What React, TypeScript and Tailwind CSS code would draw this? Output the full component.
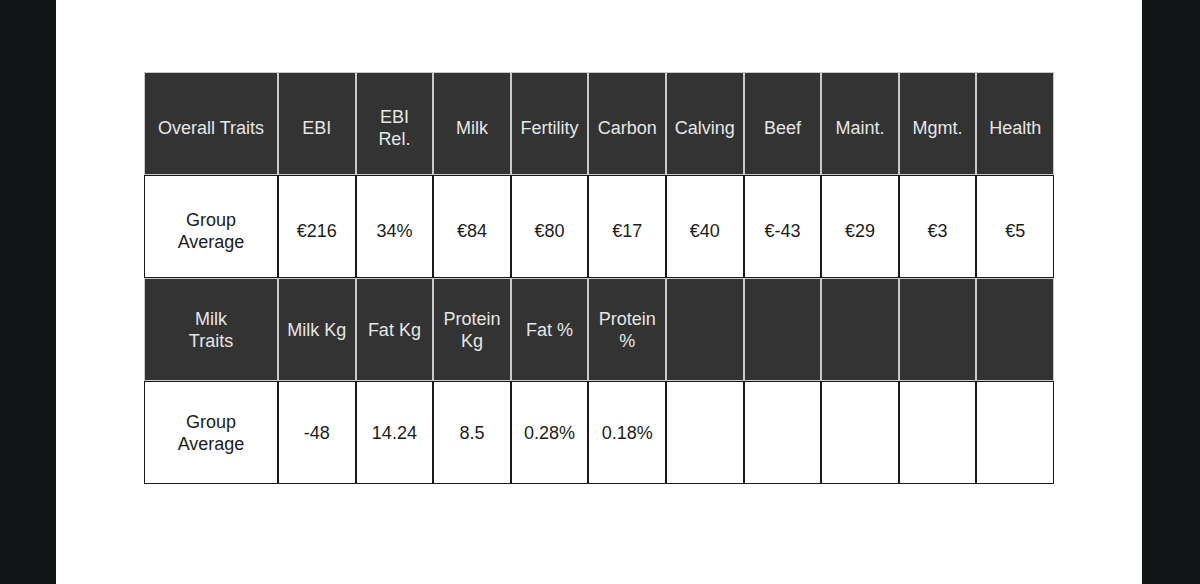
import React from "react";

type Cell = { lines: string[] };

const row1 = [
  ["Overall Traits"],
  ["EBI"],
  ["EBI", "Rel."],
  ["Milk"],
  ["Fertility"],
  ["Carbon"],
  ["Calving"],
  ["Beef"],
  ["Maint."],
  ["Mgmt."],
  ["Health"],
];
const row2 = [
  ["Group", "Average"],
  ["€216"],
  ["34%"],
  ["€84"],
  ["€80"],
  ["€17"],
  ["€40"],
  ["€-43"],
  ["€29"],
  ["€3"],
  ["€5"],
];
const row3 = [
  ["Milk", "Traits"],
  ["Milk Kg"],
  ["Fat Kg"],
  ["Protein", "Kg"],
  ["Fat %"],
  ["Protein", "%"],
  [],
  [],
  [],
  [],
  [],
];
const row4 = [
  ["Group", "Average"],
  ["-48"],
  ["14.24"],
  ["8.5"],
  ["0.28%"],
  ["0.18%"],
  [],
  [],
  [],
  [],
  [],
];

function Row({ cells, dark, shift }: { cells: string[][]; dark: boolean; shift: boolean }) {
  return (
    <>
      {cells.map((lines, i) => (
        <div
          key={i}
          className={
            dark
              ? `flex h-[103px] items-center justify-center border border-[#c9c9c9] bg-[#333333] text-center text-[18px] leading-[22px] text-[#e6e6e6] ${shift ? "pt-[9px]" : ""}`
              : `flex h-[103px] items-center justify-center border border-[#1a1a1a] bg-white text-center text-[18px] leading-[22px] text-[#1c1c1c] ${shift ? "pt-[9px]" : ""}`
          }
        >
          <div>
            {lines.map((l, j) => (
              <div key={j} className="whitespace-nowrap">
                {l}
              </div>
            ))}
          </div>
        </div>
      ))}
    </>
  );
}

export default function App() {
  return (
    <div
      className="flex h-[584px] w-[1200px] bg-[#111516]"
      style={{ fontFamily: '"Liberation Sans", Arial, sans-serif' }}
    >
      <div className="w-[56px] shrink-0 bg-[#111516]" />
      <div className="flex-1 bg-white pl-[88px] pt-[72px]">
        <div className="grid w-[910px] grid-cols-[134px_repeat(10,1fr)]">
          <Row cells={row1} dark shift />
          <Row cells={row2} dark={false} shift />
          <Row cells={row3} dark shift={false} />
          <Row cells={row4} dark={false} shift={false} />
        </div>
      </div>
      <div className="w-[58px] shrink-0 bg-[#111516]" />
    </div>
  );
}
